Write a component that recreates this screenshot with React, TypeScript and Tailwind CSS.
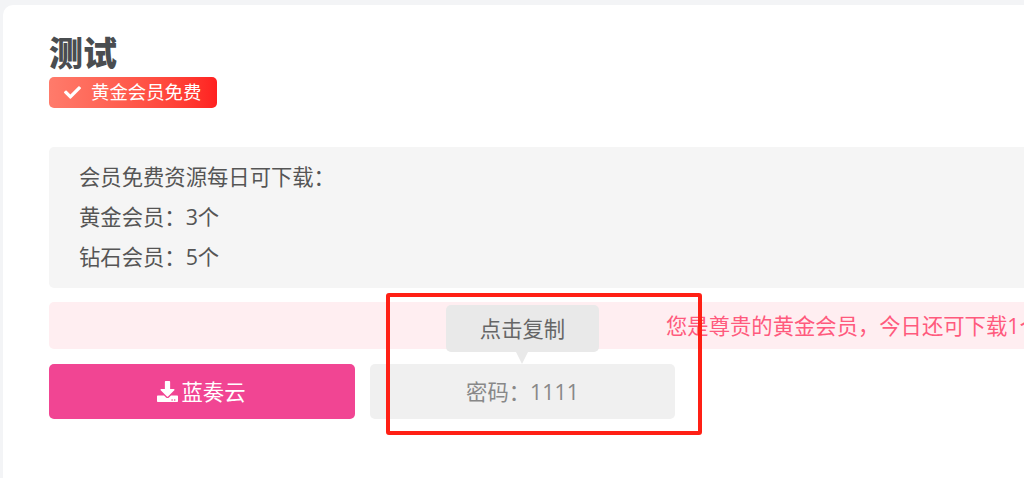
import { FaCheck, FaDownload } from "react-icons/fa";

const font = "font-['Open_Sans','Noto_Sans_CJK_SC',sans-serif]";

export default function App() {
  return (
    <div className={`relative h-[478px] w-[1024px] overflow-hidden bg-[#f3f4f6] pl-[3px] pt-[5px] ${font}`}>
      {/* Card */}
      <div className="h-[600px] w-[1200px] rounded-tl-[10px] bg-white pl-[46px] pt-[25px]">
        <h1 className="h-[47px] text-[34px] leading-[46px] font-black text-[#4a4d50]">测试</h1>

        <div className="flex h-[31px] w-[168px] items-center rounded-[5px] bg-gradient-to-r from-[#ff7b6b] to-[#ff2020] pl-[15px] text-white">
          <FaCheck className="h-[17px] w-[17px]" />
          <span className="ml-[10px] text-[18.4px] leading-none">黄金会员免费</span>
        </div>

        {/* Info panel */}
        <div className="mt-[39px] h-[141px] w-[1100px] rounded-[5px] bg-[#f5f5f5] pl-[30px] pt-[10px] text-[21.33px] leading-[40px] text-[#555555]">
          <p>会员免费资源每日可下载：</p>
          <p>黄金会员：3个</p>
          <p>钻石会员：5个</p>
        </div>

        {/* Notice */}
        <div className="mt-[14px] flex h-[47px] w-[1100px] items-center whitespace-nowrap rounded-[5px] bg-[#ffeef1] pl-[617px] text-[21.33px] text-[#ff5a7d]">
          您是尊贵的黄金会员，今日还可下载1个
        </div>

        {/* Buttons */}
        <div className="mt-[15px] flex gap-[15px]">
          <button className="flex h-[55px] w-[306px] items-center justify-center gap-[4px] rounded-[5px] bg-[#f14593] pr-[2px] text-[21.33px] text-white">
            <FaDownload className="h-[21px] w-[21px]" />
            蓝奏云
          </button>
          <div className="relative flex h-[55px] w-[305px] items-center justify-center rounded-[5px] bg-[#f0f0f0] text-[21.33px] text-[#888888]">
            密码：1111
            <div className="absolute left-[76px] top-[-59px] flex h-[47px] w-[153px] items-center justify-center rounded-[5px] bg-[#e9e9e9] text-[21.33px] text-[#666666]">
              点击复制
              <div className="absolute left-[70px] top-[47px] h-0 w-0 border-x-[6px] border-t-[12px] border-x-transparent border-t-[#e9e9e9]" />
            </div>
          </div>
        </div>
      </div>

      {/* Red annotation frame */}
      <div className="absolute left-[386px] top-[293px] h-[142px] w-[316px] rounded-[3px] border-[4px] border-[#ff2015]" />
    </div>
  );
}
